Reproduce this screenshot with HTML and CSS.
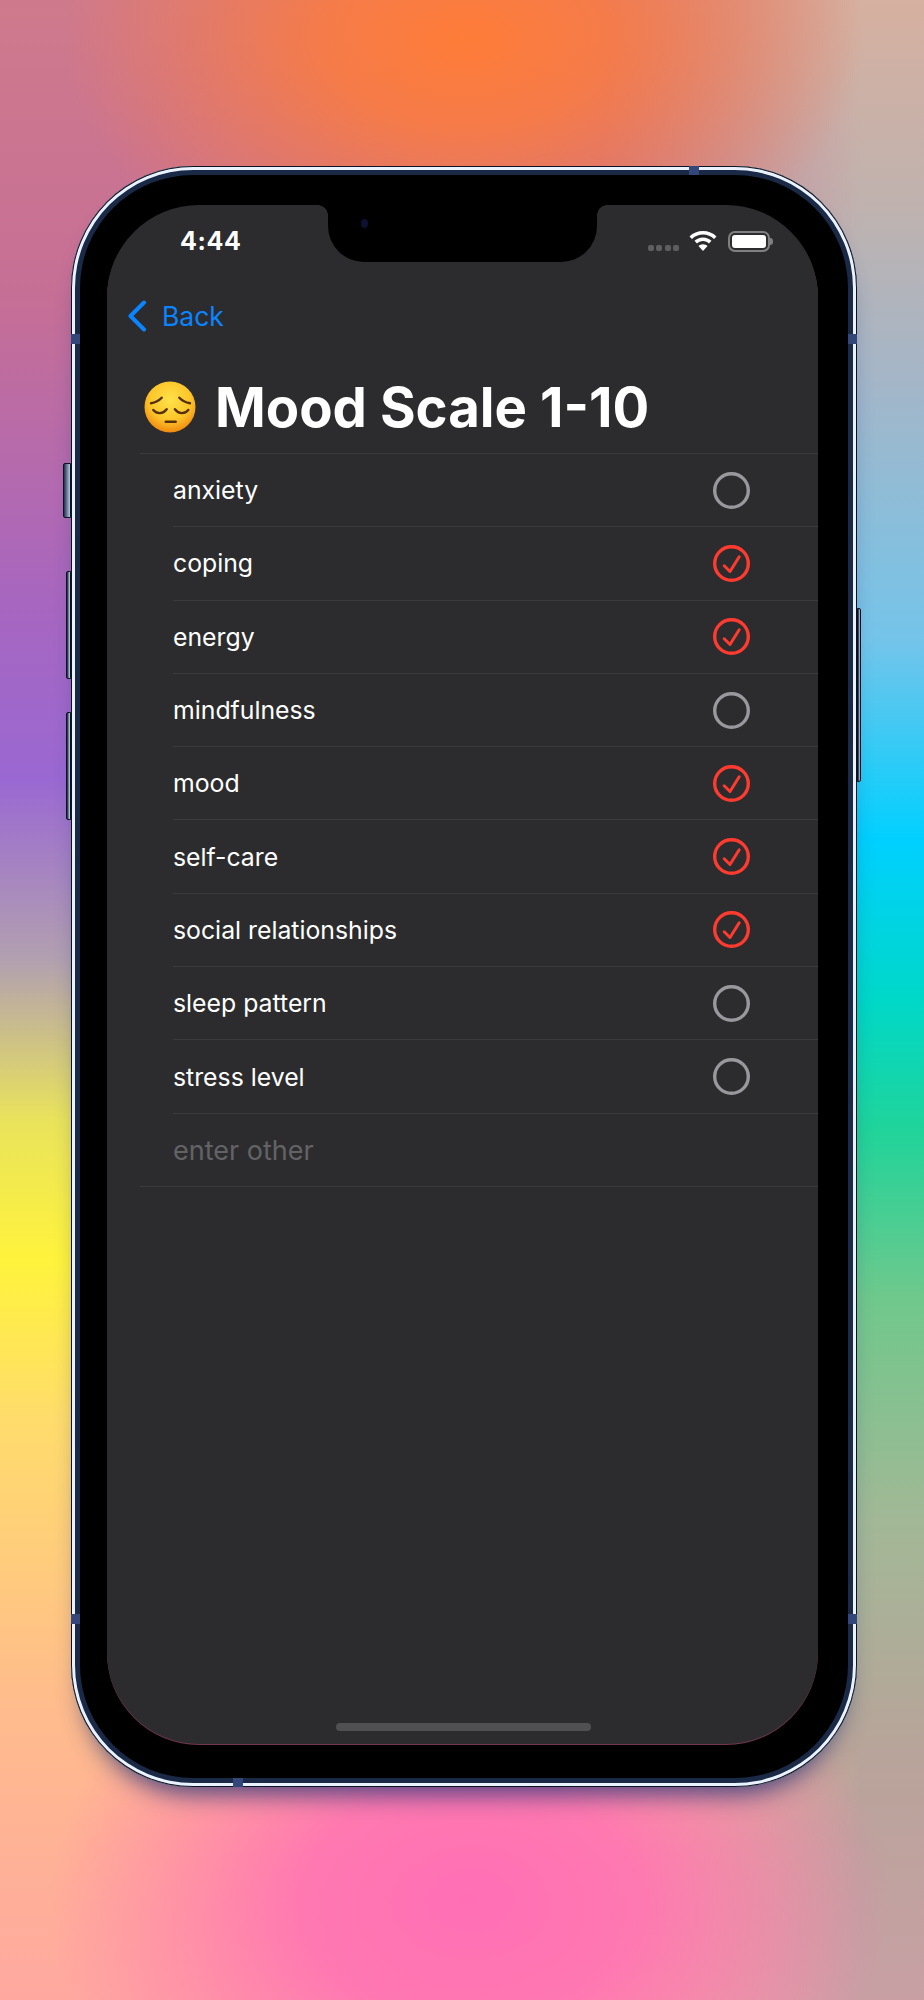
FILE: index.html
```html
<!DOCTYPE html>
<html lang="en">
<head>
  <meta charset="UTF-8" />
  <title>Mood Scale 1-10</title>
  <link rel="stylesheet" href="styles.css">
</head>
<body>

<div class="backdrop"></div>

<div class="phone">
  <span class="side silent"></span>
  <span class="side vol-up"></span>
  <span class="side vol-down"></span>
  <span class="side power"></span>
  <span class="band band-top"></span>
  <span class="band band-bottom"></span>
  <span class="band band-l1"></span>
  <span class="band band-l2"></span>
  <span class="band band-r1"></span>
  <span class="band band-r2"></span>

  <div class="screen">
    <div class="notch"><span class="camera"></span></div>

    <div class="status">
      <span class="time">4:44</span>
      <div class="status-icons">
        <div class="signal"><i></i><i></i><i></i><i></i></div>
        <svg class="wifi" viewBox="0 0 28 20">
          <path d="M14 0C8.800 0 4 2 .5 5.400L3 8c2.800-2.800 6.700-4.500 11-4.500S22.200 5.200 25 8l2.500-2.600C24 2 19.200 0 14 0z" />
          <path d="M14 6.400c-3.300 0-6.300 1.300-8.500 3.400L8 12.400c1.500-1.500 3.600-2.400 6-2.400s4.500.9 6 2.400l2.500-2.600c-2.200-2.100-5.200-3.400-8.500-3.400z" />
          <path d="M14 20l4.500-4.900c-1.100-1.100-2.700-1.800-4.500-1.800s-3.400.7-4.500 1.800z" />
        </svg>
        <div class="battery"><span class="charge"></span></div>
      </div>
    </div>

    <a class="back">
      <svg viewBox="0 0 20 32"><path d="M17 2.500 3.500 16 17 29.500" /></svg>
      <span>Back</span>
    </a>

    <h1 class="title">
      <svg class="emoji" viewBox="0 0 52 52">
        <defs>
          <radialGradient id="face" cx="50%" cy="36%" r="64%">
            <stop offset="0" stop-color="#ffe14a" />
            <stop offset="0.62" stop-color="#fdc62a" />
            <stop offset="1" stop-color="#f08a10" />
          </radialGradient>
        </defs>
        <circle cx="26" cy="26" r="25.500" fill="url(#face)" />
        <path class="feature" d="M7 22.300c4.200-.8 8-2.700 10.700-5.600" />
        <path class="feature" d="M46 22.300c-4.200-.8-8-2.700-10.700-5.600" />
        <path class="feature" d="M9.300 29c3.600 4.300 9.600 4.300 13.400-.7" />
        <path class="feature" d="M44.300 29c-3.600 4.300-9.600 4.300-13.400-.7" />
        <path class="feature" d="M21.700 40.700h10" />
      </svg>
      <span>Mood Scale 1-10</span>
    </h1>

    <ul class="list">
      <li class="row"><span>anxiety</span><svg class="mark" viewBox="0 0 37 37"><circle class="off" cx="18.500" cy="18.500" r="16.800" /></svg></li>
      <li class="row"><span>coping</span><svg class="mark" viewBox="0 0 37 37"><circle class="on" cx="18.500" cy="18.500" r="16.800" /><path class="tick" d="M11.200 20.800 17 26.500 26.200 11.800" /></svg></li>
      <li class="row"><span>energy</span><svg class="mark" viewBox="0 0 37 37"><circle class="on" cx="18.500" cy="18.500" r="16.800" /><path class="tick" d="M11.200 20.800 17 26.500 26.200 11.800" /></svg></li>
      <li class="row"><span>mindfulness</span><svg class="mark" viewBox="0 0 37 37"><circle class="off" cx="18.500" cy="18.500" r="16.800" /></svg></li>
      <li class="row"><span>mood</span><svg class="mark" viewBox="0 0 37 37"><circle class="on" cx="18.500" cy="18.500" r="16.800" /><path class="tick" d="M11.200 20.800 17 26.500 26.200 11.800" /></svg></li>
      <li class="row"><span>self-care</span><svg class="mark" viewBox="0 0 37 37"><circle class="on" cx="18.500" cy="18.500" r="16.800" /><path class="tick" d="M11.200 20.800 17 26.500 26.200 11.800" /></svg></li>
      <li class="row"><span>social relationships</span><svg class="mark" viewBox="0 0 37 37"><circle class="on" cx="18.500" cy="18.500" r="16.800" /><path class="tick" d="M11.200 20.800 17 26.500 26.200 11.800" /></svg></li>
      <li class="row"><span>sleep pattern</span><svg class="mark" viewBox="0 0 37 37"><circle class="off" cx="18.500" cy="18.500" r="16.800" /></svg></li>
      <li class="row"><span>stress level</span><svg class="mark" viewBox="0 0 37 37"><circle class="off" cx="18.500" cy="18.500" r="16.800" /></svg></li>
      <li class="row row-last"><span class="placeholder">enter other</span></li>
    </ul>

    <span class="home"></span>
  </div>
</div>

</body>
</html>
```

FILE: styles.css
```css
html, body {
  margin: 0;
  padding: 0;
}
body {
  position: relative;
  width: 924px;
  height: 2000px;
  overflow: hidden;
  padding: 166px 0 0 71px;
  box-sizing: border-box;
  font-family: 'Inter', sans-serif;
  color: #fff;
}

/* colourful wallpaper: left colours, right colours, then top and bottom blobs */
.backdrop {
  position: absolute;
  inset: 0;
  background: linear-gradient(to bottom, #cf7a8c 0, #c66f96 300px, #a766bf 600px, #9a68d2 780px, #b2a0b0 960px, #e9e35c 1120px, #fff33c 1260px, #ffdc6c 1420px, #ffbc8c 1700px, #ffa8a0 2000px);
}
.backdrop::before {
  content: '';
  position: absolute;
  inset: 0;
  background: linear-gradient(to bottom, #d6b0a0 0, #c0b2ae 200px, #a4b6c8 380px, #74c4ea 640px, #00d0ff 840px, #00d8c8 1000px, #20d49a 1130px, #70c88c 1300px, #a2b896 1520px, #b8a49a 1750px, #c8a0a4 2000px);
  -webkit-mask-image: linear-gradient(to right, transparent 600px, #000 860px);
  mask-image: linear-gradient(to right, transparent 600px, #000 860px);
}
.backdrop::after {
  content: '';
  position: absolute;
  inset: 0;
  background:
    radial-gradient(ellipse 400px 260px at 465px 40px, #ff7c38 0%, rgba(255,124,56,.8) 35%, rgba(255,124,56,0) 100%),
    radial-gradient(ellipse 420px 300px at 470px 1900px, #ff6fb5 0%, rgba(255,111,181,.85) 40%, rgba(255,111,181,0) 100%);
}

.phone {
  position: relative;
  width: 786px;
  height: 1621px;
  padding: 39px 39px 43px 36px;
  box-sizing: border-box;
  border-radius: 122px;
  background: #000;
  box-shadow:
    inset 0 0 0 1px #0b1322,
    inset 0 0 0 4px #eaf2ff,
    inset 0 0 0 9px #1a2a46,
    0 20px 26px -14px rgba(30,50,115,.85);
}

/* side buttons */
.side {
  position: absolute;
  box-sizing: border-box;
  border: 1px solid #0b1322;
  background: linear-gradient(to right, #0f1a2e, #c8d8f0);
  border-radius: 2px 0 0 2px;
}
.silent { left: -8px; top: 297px; width: 8px; height: 55px; background: linear-gradient(to right, #22304a, #b4c8e4); }
.vol-up { left: -5px; top: 405px; width: 5px; height: 108px; }
.vol-down { left: -5px; top: 546px; width: 5px; height: 108px; }
.power { right: -4px; top: 442px; width: 4px; height: 174px; border-radius: 0 2px 2px 0; }

/* antenna bands on the frame */
.band {
  position: absolute;
  background: #34477a;
}
.band-top { top: 0; left: 618px; width: 10px; height: 9px; }
.band-bottom { bottom: 0; left: 162px; width: 10px; height: 9px; }
.band-l1 { left: 0; top: 168px; width: 9px; height: 10px; }
.band-l2 { left: 0; top: 1448px; width: 9px; height: 10px; }
.band-r1 { right: 0; top: 168px; width: 9px; height: 10px; }
.band-r2 { right: 0; top: 1448px; width: 9px; height: 10px; }

.screen {
  position: relative;
  height: 100%;
  border-radius: 92px;
  background: #2c2c2e;
  box-shadow: 0 1px 0 rgba(255,120,170,.45);
}
.notch {
  position: absolute;
  top: -1px;
  left: 221px;
  width: 269px;
  height: 58px;
  background: #000;
  border-radius: 0 0 36px 36px;
}
/* small flares where the screen edge turns into the notch */
.notch::before,
.notch::after {
  content: '';
  position: absolute;
  top: 1px;
  width: 10px;
  height: 10px;
}
.notch::before {
  left: -10px;
  background: radial-gradient(circle at 0 100%, transparent 9.500px, #000 10px);
}
.notch::after {
  right: -10px;
  background: radial-gradient(circle at 100% 100%, transparent 9.500px, #000 10px);
}
.camera {
  position: absolute;
  left: 33px;
  top: 15px;
  width: 7px;
  height: 9px;
  border-radius: 50%;
  background: #0d1030;
}

.status {
  display: flex;
  justify-content: space-between;
  align-items: flex-start;
  padding: 21px 48px 0 73px;
  height: 60px;
  box-sizing: border-box;
}
.time {
  font-size: 25px;
  font-weight: 700;
  line-height: 30px;
  letter-spacing: .6px;
}
.status-icons {
  display: flex;
  align-items: flex-start;
  padding-top: 5px;
}
.signal {
  display: flex;
  gap: 2.500px;
  margin-top: 14px;
  margin-right: 10px;
}
.signal i {
  width: 6px;
  height: 6px;
  border-radius: 2px;
  background: #5e5e60;
}
.wifi {
  width: 28px;
  height: 20px;
  fill: #fff;
  margin-right: 11px;
}
.battery {
  position: relative;
  width: 42px;
  height: 21px;
  box-sizing: border-box;
  border: 2px solid #808082;
  border-radius: 7px;
  padding: 2px;
}
.battery::after {
  content: '';
  position: absolute;
  right: -5px;
  top: 5px;
  width: 3px;
  height: 7px;
  border-radius: 0 3px 3px 0;
  background: #808082;
}
.charge {
  display: block;
  height: 100%;
  border-radius: 3px;
  background: #fff;
}

.back {
  display: flex;
  align-items: center;
  height: 32px;
  margin: 35px 0 0 20px;
  color: #0a84ff;
  font-size: 26.500px;
  line-height: 32px;
}
.back svg {
  width: 20px;
  height: 32px;
  margin-right: 15px;
  fill: none;
  stroke: #0a84ff;
  stroke-width: 4;
  stroke-linecap: round;
  stroke-linejoin: round;
}

.title {
  display: flex;
  align-items: center;
  margin: 49px 0 0 37px;
  height: 52px;
  font-size: 54.500px;
  line-height: 52px;
  font-weight: 700;
}
.emoji {
  width: 52px;
  height: 52px;
  margin-right: 19px;
  flex: none;
}
.feature {
  fill: none;
  stroke: #55300a;
  stroke-width: 2.400;
  stroke-linecap: round;
}

.list {
  list-style: none;
  margin: 20px 0 0 33px;
  padding: 0;
  border-top: 1px solid #3a3a3c;
}
.row {
  display: flex;
  align-items: center;
  justify-content: space-between;
  box-sizing: border-box;
  height: 73.300px;
  margin-left: 33px;
  padding-right: 68.500px;
  border-bottom: 1px solid #3a3a3c;
  font-size: 24.800px;
}
.row-last {
  margin-left: 0;
  padding-left: 33px;
  padding-top: 2px;
  font-size: 27px;
}
.placeholder {
  color: #636366;
}
.mark {
  width: 37px;
  height: 37px;
  fill: none;
  stroke-width: 3.400;
}
.off { stroke: #98989d; }
.on { stroke: #ff3b30; }
.tick {
  stroke: #ff3b30;
  stroke-width: 3;
  stroke-linecap: round;
  stroke-linejoin: round;
}

.home {
  position: absolute;
  left: 229px;
  bottom: 13px;
  width: 255px;
  height: 8px;
  border-radius: 4px;
  background: #505052;
}
```
